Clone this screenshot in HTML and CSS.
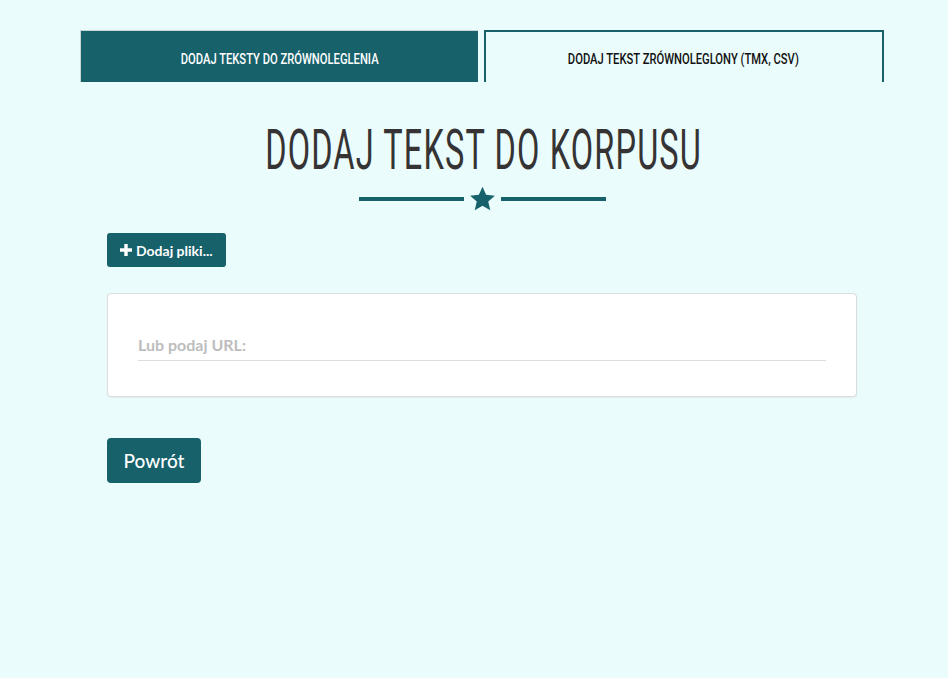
FILE: index.html
```html
<!DOCTYPE html>
<html lang="pl">
<head>
<meta charset="utf-8">
<title>Dodaj tekst do korpusu</title>
<link rel="stylesheet" href="styles.css">
</head>
<body>
<div class="page">
  <nav class="tabs">
    <a class="tab tab-active-fill"><span class="tab-label">DODAJ TEKSTY DO ZRÓWNOLEGLENIA</span></a>
    <a class="tab tab-outline"><span class="tab-label">DODAJ TEKST ZRÓWNOLEGLONY (TMX, CSV)</span></a>
  </nav>
  <main class="content">
    <h1 class="title"><span class="title-text">DODAJ TEKST DO KORPUSU</span></h1>
    <div class="divider">
      <span class="divider-line"></span>
      <svg class="divider-star" width="27" height="26" viewBox="0 0 24 23"><path d="M12 0.6l3.2 7.2 7.8 0.7-5.9 5.2 1.8 7.7L12 17.4l-6.9 4 1.8-7.7L1 8.5l7.8-0.7z" fill="#17616b"/></svg>
      <span class="divider-line"></span>
    </div>
    <button class="btn btn-small" type="button">
      <svg class="plus" width="12" height="12" viewBox="0 0 12 12"><path d="M4.3 0h3.4v4.3H12v3.4H7.7V12H4.3V7.7H0V4.3h4.3z" fill="#fff"/></svg>
      Dodaj pliki...
    </button>
    <section class="card">
      <label class="url-field">
        <span class="url-label">Lub podaj URL:</span>
      </label>
    </section>
    <button class="btn btn-large" type="button">Powrót</button>
  </main>
</div>
</body>
</html>
```
FILE: styles.css
```css
html, body {
  margin: 0;
  padding: 0;
  background: #ebfcfc;
}
body {
  font-family: Lato, "Liberation Sans", sans-serif;
  color: #333;
}
.page {
  width: 804px;
  margin-left: 80px;
  padding-top: 30px;
}
.tabs {
  display: flex;
  gap: 6px;
}
.tab {
  flex: 1;
  height: 52px;
  box-sizing: border-box;
  display: flex;
  align-items: center;
  justify-content: center;
  padding-top: 4px;
}
.tab-label {
  font-family: Roboto, "DejaVu Sans Condensed", sans-serif;
  font-weight: 500;
  font-size: 14px;
  display: inline-block;
  transform: scaleX(0.8);
  white-space: nowrap;
}
.tab-active-fill {
  background: #17616b;
  color: #fff;
  border-top: 1px solid #c9d6d6;
  border-left: 1px solid #c9d6d6;
}
.tab-outline {
  border: 2px solid #17616b;
  border-bottom: none;
  color: #111;
}
.content {
  padding: 0 27px;
}
.title {
  margin: 38px 0 0;
  text-align: center;
  font-weight: normal;
  line-height: 60px;
  height: 60px;
  white-space: nowrap;
}
.title-text {
  display: inline-block;
  font-family: Roboto, "DejaVu Sans Condensed", sans-serif;
  font-weight: 400;
  font-size: 56px;
  letter-spacing: 2px;
  color: #353333;
  transform: scaleX(0.58);
}
.divider {
  display: flex;
  justify-content: center;
  align-items: center;
  gap: 5px;
  margin-top: 6px;
  height: 26px;
}
.divider-line {
  width: 105px;
  height: 4px;
  background: #17616b;
}
.divider-star {
  display: block;
}
.btn {
  background: #17616b;
  color: #fff;
  border: none;
  font-family: Lato, "Liberation Sans", sans-serif;
  cursor: pointer;
  display: flex;
  align-items: center;
}
.btn-small {
  margin-top: 21px;
  height: 34px;
  width: 119px;
  padding: 0 0 0 13px;
  border-radius: 3px;
  font-size: 14px;
  font-weight: 700;
  gap: 4px;
}
.plus {
  display: block;
}
.card {
  margin-top: 26px;
  background: #fff;
  border: 1px solid #dcdcdc;
  border-radius: 4px;
  box-shadow: 0 1px 2px rgba(0,0,0,0.06);
  height: 104px;
  box-sizing: border-box;
  padding: 41px 30px 0 30px;
}
.url-field {
  display: block;
  border-bottom: 1px solid #ddd;
  height: 25px;
}
.url-label {
  font-size: 16px;
  font-weight: 700;
  color: #bdbdbd;
}
.btn-large {
  margin-top: 41px;
  height: 45px;
  width: 94px;
  justify-content: center;
  border-radius: 4px;
  font-size: 19px;
  font-weight: 500;
}
```
